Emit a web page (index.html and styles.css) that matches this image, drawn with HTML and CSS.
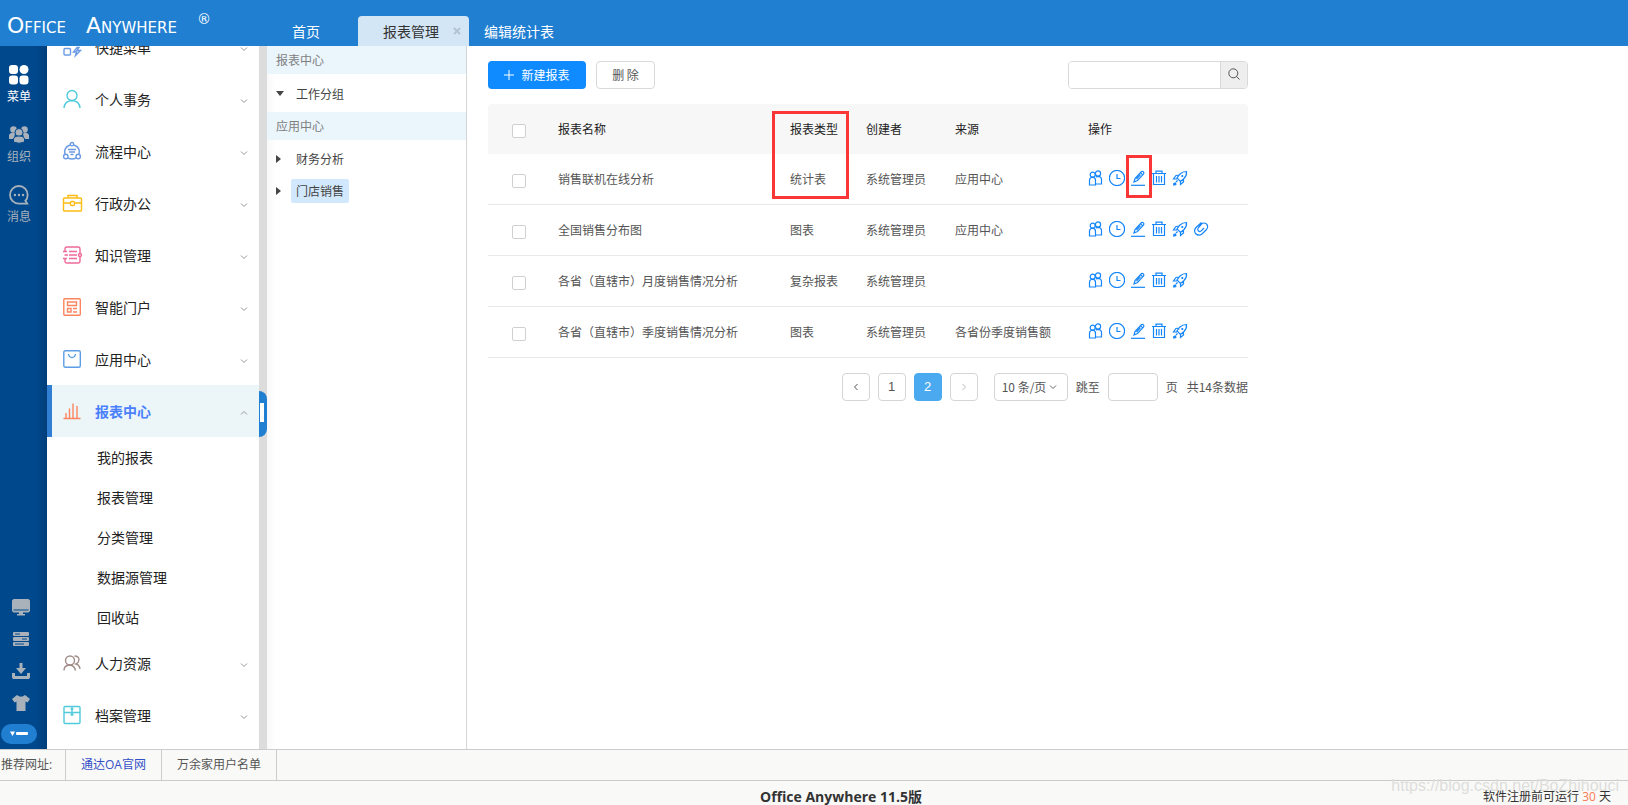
FILE: index.html
```html
<!DOCTYPE html>
<html lang="zh-CN">
<head>
<meta charset="utf-8">
<title>Office Anywhere</title>
<link rel="stylesheet" href="styles.css">
</head>
<body>
<svg class="defs" aria-hidden="true">
  <symbol id="down" viewBox="0 0 8 6"><path d="M1 1.5 4 4.5 7 1.5"/></symbol>
  <symbol id="users" viewBox="0 0 16 16"><circle cx="4.700" cy="4.700" r="2.500"/><path d="M1.500 15V10.500Q1.500 7.500 4.700 7.200 7.500 7.500 7.500 10.500V15Z"/><circle cx="10" cy="3.500" r="2.600"/><path d="M7.800 7Q9 6.300 10 6.300 13.500 6.600 13.500 9.600V14H7.800"/></symbol>
  <symbol id="clock" viewBox="0 0 16 16"><circle cx="8" cy="8" r="7.600"/><path d="M8 4V8.500H11.500"/></symbol>
  <symbol id="edit" viewBox="0 0 16 16"><path d="M1 15.300H15"/><path d="M4 12 5 8.500 11.500 1.500Q13 .8 13.800 2.500L13.700 3.800 7.500 10.500ZM10.500 2.700 12.700 4.900M6.500 9 10.500 4.600"/></symbol>
  <symbol id="trash" viewBox="0 0 16 16"><path d="M1 3.500H15M5 3V1.200H11V3M2.500 3.500V14.500H13.500V3.500M5.500 6V12.500M8 6V12.500M10.500 6V12.500"/></symbol>
  <symbol id="rocket" viewBox="0 0 16 16"><path d="M14.500 1.500Q10.500 1.500 8 4L5 8 8.500 11.500 12 8.500Q15 5.500 14.500 1.500ZM7 5 4 5.500 1.500 9H5M8.500 11.500V14.500L11.500 12V9M5.500 10.500 4 12"/><circle class="solid" cx="10.300" cy="6" r=".5"/><path class="solid" d="M1.800 13.500 3.500 13 3.800 14.500 1.800 15Z"/></symbol>
  <symbol id="clip" viewBox="0 0 16 16"><path d="M8.500 1.500 3 6.500Q.5 9.500 2.500 12.500 5.500 15.500 9 13L13.500 8.500Q15.800 5.500 13.500 3 11 1 8.500 3L5.500 6.500Q4 8.500 5.500 10 7 11.300 8.500 9.700L11 7"/></symbol>
</svg>

<div class="app">
  <header class="top">
    <h1 class="logo"><span>Office</span><span>Anywhere</span><span class="reg">®</span></h1>
    <nav class="tabs">
      <a class="tab home" href="#">首页</a>
      <a class="tab current" href="#">报表管理<svg class="close" viewBox="0 0 8 8"><path d="M1 1 7 7M7 1 1 7"/></svg></a>
      <a class="tab" href="#">编辑统计表</a>
    </nav>
  </header>

  <div class="body">
    <aside class="rail">
      <div class="rail-group">
        <a class="rail-item on" href="#">
          <svg width="20" height="20" viewBox="0 0 20 20"><rect x="0" y="0" width="9" height="9" rx="3"/><circle cx="15" cy="4.500" r="4.500"/><rect x="0" y="10.500" width="9" height="9" rx="3"/><rect x="10.500" y="10.500" width="9" height="9" rx="3"/></svg>
          菜单</a>
        <a class="rail-item" href="#">
          <svg width="20" height="20" viewBox="0 0 20 20"><circle cx="4.500" cy="4.500" r="3.300"/><circle cx="15.500" cy="4.500" r="3.300"/><path d="M0 14V10Q1 7.500 4.500 7.500L6 8.500 5 14ZM20 14V10Q19 7.500 15.500 7.500L14 8.500 15 14Z"/><g class="cut"><circle cx="10" cy="7.500" r="4"/><path d="M4.500 17V14Q5 11 10 11T15.500 14V17Q10 19.500 4.500 17Z"/></g></svg>
          组织</a>
        <a class="rail-item" href="#">
          <svg width="22" height="22" viewBox="0 0 22 22"><path class="ring" d="M20 20.500H11A9.700 9.700 0 1 1 20.500 11Q20.500 15 18 17.300Z"/><circle cx="6.500" cy="11" r="1.300"/><circle cx="11" cy="11" r="1.300"/><circle cx="15.500" cy="11" r="1.300"/></svg>
          消息</a>
      </div>
      <div class="rail-tools">
        <button aria-label="桌面"><svg width="18" height="17" viewBox="0 0 18 17"><path d="M1.500 0H16.500L18 1.500V12L16.500 13.500H11V15H13V16.500H5V15H7V13.500H1.500L0 12V1.500Z"/><path class="slit" d="M1.500 11H16.500"/></svg></button>
        <button aria-label="服务"><svg width="18" height="14" viewBox="0 0 18 14"><rect x="1" width="16" height="4" rx="1"/><rect x="1" y="5" width="16" height="4" rx="1"/><rect x="1" y="10" width="16" height="4" rx="1"/><path class="slit" d="M3 2H8M10 7H15M3 12H12"/></svg></button>
        <button aria-label="下载"><svg width="18" height="16" viewBox="0 0 18 16"><path d="M7.500 0H10.500V5H14L9 11 4 5H7.500Z"/><path d="M0 10H3V13H15V10H18V14.500L17 16H1L0 14.500Z"/></svg></button>
        <button aria-label="主题"><svg width="18" height="16" viewBox="0 0 18 16"><path d="M5 0Q9 3.500 13 0L18 4 15.500 7.500 13.500 6.500V16H4.500V6.500L2.500 7.500 0 4Z"/></svg></button>
        <button class="pill" aria-label="收起"><svg width="18" height="6" viewBox="0 0 18 6"><path d="M0 .5H5L2.500 5Z"/><rect x="6" y="1" width="12" height="3" rx="1"/></svg></button>
      </div>
    </aside>

    <nav class="menu">
      <ul class="menu-list">
        <li><a href="#"><svg class="mi blue" viewBox="0 0 18 18"><rect x="1" y="1" width="6" height="6"/><rect x="1" y="10.500" width="6.500" height="6.500" rx="1"/><rect x="10.500" y="1" width="6" height="6"/><path d="M14 9.500 10.500 14H13.500L12.500 17.500 17.500 12.500H14L16 9.500Z"/></svg>快捷菜单<svg class="arrow"><use href="#down"/></svg></a></li>
        <li><a href="#"><svg class="mi cyan" viewBox="0 0 18 18"><circle cx="9" cy="5.500" r="5"/><path d="M1 18Q1.500 11 9 10.500 16.500 11 17 18"/></svg>个人事务<svg class="arrow"><use href="#down"/></svg></a></li>
        <li><a href="#"><svg class="mi blue" viewBox="0 0 18 18"><circle cx="9" cy="2.200" r="1.700"/><circle cx="2.800" cy="14.500" r="2.200"/><circle cx="15.200" cy="14.500" r="2.200"/><path d="M7 3Q0 6 2 12M11 3Q18 6 16 12M5 16Q9 18 13 16M5 7.500H13M6 10H12M7.500 12.500H10.500"/></svg>流程中心<svg class="arrow"><use href="#down"/></svg></a></li>
        <li><a href="#"><svg class="mi gold" viewBox="0 0 18 18"><rect x=".5" y="4" width="18" height="13" rx="1"/><path d="M5 4V1.500H14V4M1 9H7M11.500 9H18"/><rect x="7.500" y="7.500" width="4" height="4" rx="1"/></svg>行政办公<svg class="arrow"><use href="#down"/></svg></a></li>
        <li><a href="#"><svg class="mi pink" viewBox="0 0 18 18"><path d="M2 6V3Q2 1 4 1H15Q17 1 17 3V7M17 11V15Q17 17 15 17H4Q2 17 2 15V12M0 5.500H4M0 12.500H4M1.500 9H5M6 5.500H14M6 9H14M6 12.500H14"/><circle cx="17" cy="9" r="1.500"/></svg>知识管理<svg class="arrow"><use href="#down"/></svg></a></li>
        <li><a href="#"><svg class="mi coral" viewBox="0 0 18 18"><rect x=".8" y=".8" width="16.500" height="16.500" rx="1"/><path d="M4.500 4H13.500V7.500H4.500ZM4.500 10.500H8V14H4.500ZM10 10.500H14M10 14H14"/></svg>智能门户<svg class="arrow"><use href="#down"/></svg></a></li>
        <li><a href="#"><svg class="mi sky" viewBox="0 0 18 18"><rect x=".8" y=".8" width="16.500" height="16.500" rx="1.500"/><path d="M5.500 4Q6 7.500 9 7.500T12.500 4"/></svg>应用中心<svg class="arrow"><use href="#down"/></svg></a></li>
        <li class="open">
          <a href="#"><svg class="mi coral" viewBox="0 0 18 18"><path d="M.5 16.500H17.500M3 16V11M6.500 16V6.500M10 16V1.500M14 16V4"/></svg>报表中心<svg class="arrow up"><use href="#down"/></svg></a>
          <ul class="sub">
            <li><a href="#">我的报表</a></li>
            <li><a href="#">报表管理</a></li>
            <li><a href="#">分类管理</a></li>
            <li><a href="#">数据源管理</a></li>
            <li><a href="#">回收站</a></li>
          </ul>
        </li>
        <li><a href="#"><svg class="mi brown" viewBox="0 0 18 18"><circle cx="7" cy="6.500" r="4.500"/><path d="M1 16.500Q1 11.500 6.500 11 11.500 11.500 12.500 16.500M11.500 2Q16 2 16 6 15.500 9 13 10 16.500 11 17 15"/></svg>人力资源<svg class="arrow"><use href="#down"/></svg></a></li>
        <li><a href="#"><svg class="mi cyan" viewBox="0 0 18 18"><rect x="1" y=".5" width="16" height="17" rx="1"/><path d="M1 6.500H17M9 1V10M7.500 3H10.500M7.500 8.500H10.500"/></svg>档案管理<svg class="arrow"><use href="#down"/></svg></a></li>
      </ul>
    </nav>
    <div class="gutter"><button class="handle" aria-label="折叠菜单"></button></div>

    <aside class="tree">
      <h2>报表中心</h2>
      <div class="node expanded"><i class="caret"></i><a href="#">工作分组</a></div>
      <h2>应用中心</h2>
      <div class="node"><i class="caret"></i><a href="#">财务分析</a></div>
      <div class="node"><i class="caret"></i><a class="picked" href="#">门店销售</a></div>
    </aside>

    <main class="main">
      <div class="toolbar">
        <button class="btn primary"><svg width="10" height="10" viewBox="0 0 10 10"><path d="M5 0V10M0 5H10"/></svg>新建报表</button>
        <button class="btn">删 除</button>
        <form class="search">
          <input type="text" aria-label="搜索">
          <button type="button" aria-label="搜索"><svg width="12" height="12" viewBox="0 0 12 12"><circle cx="5.300" cy="5.300" r="4.500"/><path d="M8.500 8.500 11.500 11.500"/></svg></button>
        </form>
      </div>

      <div class="grid">
        <table>
          <colgroup><col class="c-check"><col><col class="c-type"><col class="c-owner"><col class="c-source"><col class="c-ops"></colgroup>
          <thead>
            <tr><th><input type="checkbox" aria-label="全选"></th><th>报表名称</th><th>报表类型</th><th>创建者</th><th>来源</th><th>操作</th></tr>
          </thead>
          <tbody>
            <tr><td><input type="checkbox" aria-label="选择"></td><td>销售联机在线分析</td><td>统计表</td><td>系统管理员</td><td>应用中心</td>
              <td><div class="ops"><svg><use href="#users"/></svg><svg><use href="#clock"/></svg><svg><use href="#edit"/></svg><svg><use href="#trash"/></svg><svg><use href="#rocket"/></svg></div></td></tr>
            <tr><td><input type="checkbox" aria-label="选择"></td><td>全国销售分布图</td><td>图表</td><td>系统管理员</td><td>应用中心</td>
              <td><div class="ops"><svg><use href="#users"/></svg><svg><use href="#clock"/></svg><svg><use href="#edit"/></svg><svg><use href="#trash"/></svg><svg><use href="#rocket"/></svg><svg><use href="#clip"/></svg></div></td></tr>
            <tr><td><input type="checkbox" aria-label="选择"></td><td>各省（直辖市）月度销售情况分析</td><td>复杂报表</td><td>系统管理员</td><td></td>
              <td><div class="ops"><svg><use href="#users"/></svg><svg><use href="#clock"/></svg><svg><use href="#edit"/></svg><svg><use href="#trash"/></svg><svg><use href="#rocket"/></svg></div></td></tr>
            <tr><td><input type="checkbox" aria-label="选择"></td><td>各省（直辖市）季度销售情况分析</td><td>图表</td><td>系统管理员</td><td>各省份季度销售额</td>
              <td><div class="ops"><svg><use href="#users"/></svg><svg><use href="#clock"/></svg><svg><use href="#edit"/></svg><svg><use href="#trash"/></svg><svg><use href="#rocket"/></svg></div></td></tr>
          </tbody>
        </table>
        <div class="mark mark-type"></div>
        <div class="mark mark-edit"></div>
      </div>

      <div class="pager">
        <button aria-label="上一页"><svg class="turn left"><use href="#down"/></svg></button>
        <button>1</button>
        <button class="now">2</button>
        <button aria-label="下一页" disabled><svg class="turn right"><use href="#down"/></svg></button>
        <span class="size"><select aria-label="每页条数"><option>10 条/页</option></select><svg class="arrow"><use href="#down"/></svg></span>
        <label for="jump">跳至</label>
        <input id="jump" type="text">
        <span>页</span>
        <span class="total">共14条数据</span>
      </div>
    </main>
  </div>

  <div class="links">
    <span>推荐网址:</span>
    <a class="hot" href="#">通达OA官网</a>
    <a href="#">万余家用户名单</a>
  </div>
  <footer class="foot">
    <strong>Office Anywhere 11.5版</strong>
    <span class="trial">软件注册前可运行 <em>30</em> 天</span>
    <span class="stamp">https://blog.csdn.net/BoZhihouci</span>
  </footer>
</div>
</body>
</html>
```

FILE: styles.css
```css
* { box-sizing: border-box; }
body {
  margin: 0;
  font: 12px/18px "Noto Sans CJK SC", sans-serif;
  color: #555;
  background: #fff;
  overflow: hidden;
}
a { color: inherit; text-decoration: none; }
ul { list-style: none; margin: 0; padding: 0; }
button, input, select { font: inherit; color: inherit; margin: 0; }
button { padding: 0; border: 0; background: none; }
svg { fill: none; stroke: currentColor; flex: none; }
.defs { position: absolute; width: 0; height: 0; }
.app { display: flex; flex-direction: column; height: 100vh; }

/* top bar */
.top { display: flex; align-items: flex-end; height: 46px; flex: none; background: #217fd2; color: #fff; }
.logo {
  display: flex;
  gap: 20px;
  width: 259px;
  margin: 0;
  padding: 0 0 8px 7px;
  font: 22px/24px "DejaVu Sans", sans-serif;
  font-variant-caps: small-caps;
}
.reg { font-size: 14px; line-height: 10px; }
.tabs { display: flex; font-size: 14px; line-height: 30px; }
.tab { padding: 0 15px; }
.home { width: 99px; padding-left: 33px; }
.current { position: relative; width: 111px; padding-left: 25px; background: #d3e6f6; color: #333; border-radius: 4px 4px 0 0; }
.close { position: absolute; right: 8px; top: 11px; width: 8px; height: 8px; color: #b4c4d1; stroke-width: 2; }

.body { display: flex; flex: 1; min-height: 0; }

/* icon rail */
.rail {
  display: flex;
  flex-direction: column;
  justify-content: space-between;
  width: 47px;
  flex: none;
  padding-top: 19px;
  background: linear-gradient(90deg, #00488c 75%, #003e7a);
  color: #a9b2ba;
}
.rail svg { fill: currentColor; stroke: none; }
.rail-item { display: flex; flex-direction: column; align-items: center; gap: 2px; width: 38px; height: 60px; }
.rail-item svg { height: 20px; overflow: visible; }
.rail-item.on { color: #fff; }
.rail .cut { stroke: #00488c; stroke-width: 1; }
.rail .ring { fill: none; stroke: currentColor; stroke-width: 2; }
.rail .slit { stroke: #00488c; stroke-width: 1; }
.rail-tools { display: flex; flex-direction: column; align-items: center; width: 42px; padding-bottom: 5px; }
.rail-tools button { display: grid; place-items: center; height: 32px; }
.rail-tools .pill { width: 36px; height: 20px; margin: 5px 4px 0 0; border-radius: 10px; background: #217fd2; color: #fff; }

/* main menu */
.menu { width: 212px; flex: none; overflow: hidden; color: #222; font-size: 14px; }
.menu-list { margin-top: -25px; }
.menu-list > li > a { display: flex; align-items: center; height: 52px; padding: 0 11px 0 16px; }
.mi { width: 18px; height: 18px; margin-right: 14px; stroke-width: 1.4; overflow: visible; }
.arrow { width: 8px; height: 6px; margin-left: auto; color: #999; }
.menu .arrow { margin-top: 4px; }
.up { transform: rotate(180deg); }
.blue { color: #6b9be4; }
.cyan { color: #4fcbdc; }
.gold { color: #fdbb14; }
.pink { color: #ee6a99; }
.coral { color: #fc845f; }
.sky { color: #5b9ee6; }
.brown { color: #a28d88; }
.menu-list > .open > a { padding-left: 11px; border-left: 5px solid #307fd4; background: #ecf6f9; color: #4a80fb; font-weight: bold; }
.sub a { display: block; padding-left: 50px; line-height: 40px; }

.gutter { width: 8px; flex: none; background: #dcdcdc; }
.handle { display: block; width: 8px; height: 46px; margin-top: 345px; border-radius: 0 8px 8px 0; background: linear-gradient(#fff, #fff) 1px 12px / 4px 19px no-repeat #217fd2; }

/* report tree */
.tree { width: 200px; flex: none; border-right: 1px solid #d5d5d5; color: #444; background: linear-gradient(90deg, #f8f8f8, #fff 8px); }
.tree h2 { margin: 0 0 3px; padding-left: 9px; background: #eaf5fc; color: #808080; font-size: 12px; font-weight: normal; line-height: 28px; }
.node { display: flex; align-items: center; height: 32px; padding-left: 9px; gap: 10px; }
.expanded { height: 35px; padding-bottom: 2px; }
.node a { padding: 0 5px; line-height: 24px; border-radius: 2px; }
.node .picked { background: #d2e8fc; }
.caret { width: 5px; height: 8px; background: #444; clip-path: polygon(0 0, 100% 50%, 0 100%); }
.expanded .caret { width: 8px; height: 5px; margin-right: -3px; clip-path: polygon(0 0, 100% 0, 50% 100%); }

/* report list */
.main { flex: 1; padding: 15px 21px; }
.toolbar, .grid, .pager { max-width: 760px; }
.toolbar { display: flex; gap: 10px; margin-bottom: 15px; }
.btn { width: 59px; height: 28px; border: 1px solid #d9d9d9; border-radius: 4px; background: #fff; }
.primary { display: flex; align-items: center; justify-content: center; gap: 7px; width: 98px; border: 0; background: #108bff; color: #fff; }
.search { display: flex; width: 180px; height: 28px; margin-left: auto; border: 1px solid #d9d9d9; border-radius: 4px; overflow: hidden; }
.search input { flex: 1; min-width: 0; border: 0; }
.search button { width: 27px; border-left: 1px solid #d9d9d9; background: #eee; }
.grid { position: relative; }
table { width: 100%; table-layout: fixed; border-collapse: separate; border-spacing: 0; }
th, td { height: 51px; padding: 0; border-bottom: 1px solid #e8e8e8; text-align: left; font-weight: normal; }
th { height: 50px; border: 0; background: #f7f7f7; color: #222; }
th:first-child { border-radius: 4px 0 0 0; }
th:last-child { border-radius: 0 4px 0 0; }
.c-check { width: 70px; }
.c-type { width: 76px; }
.c-owner { width: 89px; }
.c-source { width: 133px; }
.c-ops { width: 160px; }
table input { appearance: none; display: block; width: 14px; height: 14px; margin: 4px 0 0 24px; border: 1px solid #d0d0d0; border-radius: 2px; background: #fff; }
.ops { display: flex; gap: 5px; margin-bottom: 3px; color: #1485fa; stroke-width: 1.2; }
.ops svg { width: 16px; height: 16px; overflow: visible; }
.solid { fill: currentColor; }
.mark { position: absolute; border: 3px solid #fb3636; }
.mark-type { right: 399px; top: 7px; width: 77px; height: 88px; }
.mark-edit { right: 96px; top: 51px; width: 26px; height: 43px; }

/* pagination */
.pager { display: flex; align-items: center; justify-content: flex-end; gap: 8px; margin-top: 15px; }
.pager button, .pager input, .size { height: 28px; border: 1px solid #d5d5d5; border-radius: 4px; background: #fff; }
.pager button { display: grid; place-items: center; width: 28px; font-family: "Liberation Sans", sans-serif; font-size: 13px; }
.pager .now { border-color: #4aa9ef; background: #4aa9ef; color: #fff; }
.pager button:disabled { color: #bbb; }
.turn { width: 8px; height: 6px; }
.left { transform: rotate(90deg); }
.right { transform: rotate(-90deg); }
.size { display: flex; align-items: center; width: 74px; margin-left: 8px; padding: 0 10px 0 7px; }
.size select { appearance: none; width: 48px; padding: 0; border: 0; background: none; }
.size .arrow { color: #666; }
.pager input { width: 50px; }
.total { margin-left: 1px; }

/* bottom bars */
.links, .foot { font-family: "Open Sans", "Noto Sans CJK SC", sans-serif; background: #f9f9f7; border-top: 1px solid #ccc; flex: none; }
.links { display: flex; height: 31px; line-height: 30px; }
.links > * { padding: 0 15px; border-right: 1px solid #ccc; }
.links > span { width: 66px; padding: 0 0 0 1px; }
.links .hot { color: #3350c8; }
.foot { position: relative; display: grid; place-items: center; height: 25px; color: #333; white-space: nowrap; }
.foot strong { padding-top: 6px; margin-left: 54px; font-size: 14px; line-height: 20px; }
.trial { position: absolute; right: 17px; top: 7px; z-index: 1; }
.trial em { color: #fa7a55; font-style: normal; }
.stamp { position: absolute; right: 9px; top: -4px; color: #dededc; font: 16px/18px "Liberation Sans", sans-serif; }
```
